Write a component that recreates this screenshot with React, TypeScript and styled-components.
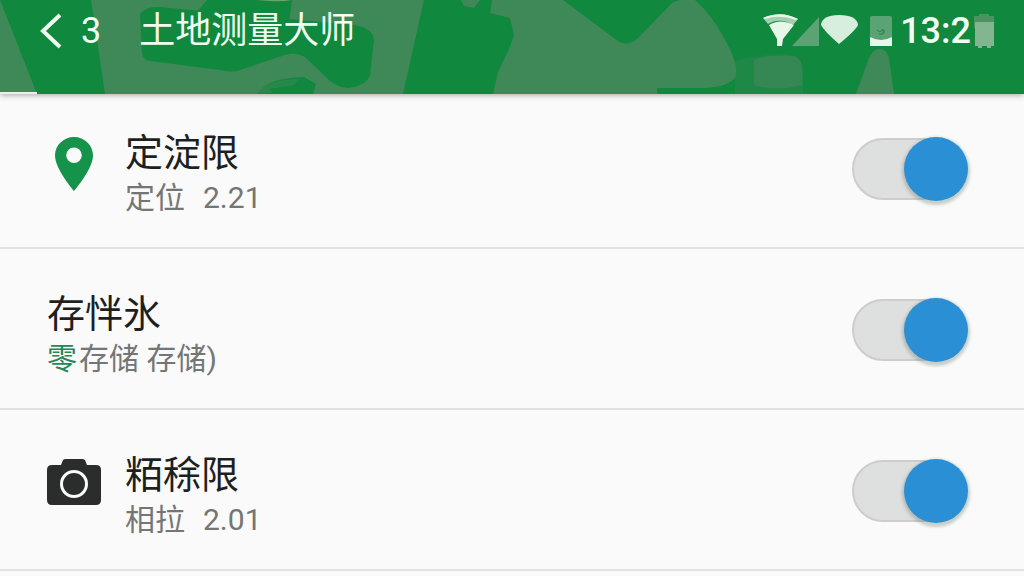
import React from 'react';
import styled, { createGlobalStyle } from 'styled-components';

const GlobalStyle = createGlobalStyle`
  * { box-sizing: border-box; }
  body {
    margin: 0;
    background: #f9faf9;
    font-family: Roboto, "Noto Sans CJK SC", sans-serif;
  }
`;

const Header = styled.header`
  position: relative;
  display: flex;
  align-items: flex-start;
  height: 94px;
  padding: 7px 29px 0 40px;
  background: #10883e;
  color: #f0fff2;
  box-shadow: 0 1px 6px rgba(0, 0, 0, 0.35);
`;

const Pattern = styled.svg`
  position: absolute;
  inset: 0;
  width: 100%;
  height: 100%;
`;

const BackButton = styled.button`
  position: relative;
  display: flex;
  align-items: center;
  gap: 19px;
  height: 48px;
  padding: 0;
  border: 0;
  background: none;
  color: inherit;
  font: 36px/48px Roboto, sans-serif;
`;

const Title = styled.h1`
  position: relative;
  flex: 1;
  margin: 0 0 0 38px;
  font-size: 36px;
  line-height: 48px;
  font-weight: 400;
`;

const Status = styled.div`
  position: relative;
  display: flex;
  align-items: center;
  height: 48px;
`;

const Clock = styled.time`
  margin: 0 3px 0 8px;
  font-size: 36px;
  line-height: 48px;
  font-weight: 500;
`;

const Progress = styled.div`
  position: absolute;
  left: 0;
  bottom: 0;
  width: 37px;
  height: 2px;
  background: #e4f3e7;
`;

const Row = styled.label`
  display: flex;
  align-items: flex-start;
  height: 161px;
  padding: 41px 60px 0 47px;
  border-bottom: 2px solid #e0e2e1;

  &:first-child {
    height: 155px;
    padding-top: 35px;
  }
`;

const IconSlot = styled.span`
  display: flex;
  justify-content: center;
  width: 54px;
  margin-right: 24px;
  padding-top: 8px;
`;

const Texts = styled.span`
  display: flex;
  flex: 1;
  flex-direction: column;
`;

const Name = styled.span`
  color: #1e1f1f;
  font-size: 38px;
  line-height: 48px;
`;

const Detail = styled.span`
  color: #747675;
  font-size: 30px;
  line-height: 42px;
`;

const Value = styled.span`
  margin-left: 18px;
`;

const Accent = styled.span`
  margin-right: 2px;
  color: #26865a;
`;

const Switch = styled.input`
  appearance: none;
  display: flex;
  align-items: center;
  width: 112px;
  height: 62px;
  margin: 9px 0 0;
  border: 2px solid #cccdcd;
  border-radius: 31px;
  background: #dedfdf;

  &::before {
    content: "";
    flex: none;
    width: 64px;
    height: 64px;
    border-radius: 50%;
    background: #f4f4f4;
    box-shadow: 0 2px 3px 2px rgba(110, 125, 115, 0.35);
  }

  &:checked::before {
    margin-left: 50px;
    background: #2b8fd5;
  }
`;

const PinIcon = () => (
  <svg width="38" height="54" viewBox="0 0 38 54" aria-hidden="true">
    <path fill="#16934a" fillRule="evenodd" d="M19 0C8.500 0 0 8.200 0 18.500C0 32 19 54 19 54S38 32 38 18.500C38 8.200 29.500 0 19 0ZM19 10.500a7.800 7.800 0 1 1 0 15.600a7.800 7.800 0 0 1 0-15.600Z" />
  </svg>
);

const CameraIcon = () => (
  <svg width="54" height="48" viewBox="0 0 54 48" aria-hidden="true">
    <path fill="#2b2c2c" d="M5 6H14L16 1Q17 0 19 0H35Q37 0 38 1L40 6H49Q54 6 54 11V41Q54 46 49 46H5Q0 46 0 41V11Q0 6 5 6Z" />
    <circle cx="27" cy="25" r="12.500" fill="none" stroke="#fafafa" strokeWidth="3" />
  </svg>
);

const MapPattern = () => (
  <Pattern viewBox="0 0 1024 94" preserveAspectRatio="none" aria-hidden="true">
    <g fill="#3f8858">
      <path d="M0 0L37 94H0Z" />
      <path d="M91 0H530L563 0L614 38Q626 49 638 38L673 2L680 0H695Q712 15 724 38Q740 66 735 78Q725 89 695 88H657V94H105Z" />
      <path d="M735 61Q755 55 785 54Q803 55 803 72V94H735Z" opacity="0.300" />
      <path d="M754 60Q767 54 794 56Q802 58 802 70V85Q778 92 754 85Z" opacity="0.700" />
      <path d="M856 94L869 58Q873 49 879 49Q887 49 889 58L894 94Z" />
    </g>
    <g fill="#10883e">
      <path d="M140 15Q144 6 160 7L190 10L354 25Q373 28 374 40L370 75Q366 86 348 88Q337 87 329 80L305 57Q295 51 285 55L240 70Q231 73 220 70L150 61Q143 60 142 53Z" />
      <path d="M207 0H292L288 32H180Z" />
      <path d="M424 0H461L464 6L474 8L480 0H492L490 13L510 18L514 35L509 49L498 72L493 94H403Z" />
      <path d="M257 94Q266 80 292 78L304 77L316 84L313 94Z" />
    </g>
    <path d="M258 91Q267 80 299 79L294 85L270 89L272 93L257 94Z" fill="#3f8858" opacity="0.500" />
    <path d="M256 0H292Q280 2 270 1Z" fill="#6da56d" />
  </Pattern>
);

const StatusIcons = () => (
  <svg width="130" height="36" viewBox="762 11 130 36" aria-hidden="true">
    <path d="M763 16Q781 8 798 17L793 23Q780 15 768 22Z" fill="#a4cfae" />
    <path d="M763 16Q781 8 798 17L796 18Q780 12 765 17Z" fill="#e6f6e8" />
    <path d="M769 23Q780 16 794 23L783 37L782 44H777V37Z" fill="#e6f6e8" />
    <path d="M819 15V44H792Z" fill="#5ba373" />
    <path d="M821 23Q822 13 839 13Q857 13 858 23Q856 28 839 42Q824 29 821 23Z" fill="#d8eedc" />
    <rect x="870" y="14" width="22" height="30" rx="2" fill="#5ba373" />
    <path d="M870 35Q881 41 892 35V44H870Z" fill="#e6f6e8" />
    <path d="M877 28L880 30L883 27V32H879M884 28V31" fill="none" stroke="#337d4d" />
  </svg>
);

const BatteryIcon = () => (
  <svg width="21" height="36" viewBox="0 0 21 36" aria-hidden="true">
    <path d="M5 1H15V3H20V15H0V3H5Z" fill="#4d9362" />
    <path d="M1 9H20V33H17V35H13V33H8V35H4V33H1Z" fill="#83b591" />
  </svg>
);

interface Permission {
  name: string;
  detail: string;
  value?: string;
  accent?: string;
  icon?: React.ReactNode;
}

const permissions: Permission[] = [
  { name: '定淀限', detail: '定位', value: '2.21', icon: <PinIcon /> },
  { name: '存怑氷', accent: '零', detail: '存储 存储)' },
  { name: '粨稌限', detail: '相拉', value: '2.01', icon: <CameraIcon /> },
];

export default function App() {
  return (
    <>
      <GlobalStyle />
      <Header>
        <MapPattern />
        <BackButton type="button" aria-label="返回 3">
          <svg width="22" height="36" viewBox="0 0 22 36" fill="none" stroke="currentColor" strokeWidth="4" aria-hidden="true">
            <path d="M20 2L3 18L20 34" />
          </svg>
          3
        </BackButton>
        <Title>土地测量大师</Title>
        <Status>
          <StatusIcons />
          <Clock>13:2</Clock>
          <BatteryIcon />
        </Status>
        <Progress />
      </Header>
      <main>
        {permissions.map((item) => (
          <Row key={item.name}>
            {item.icon && <IconSlot>{item.icon}</IconSlot>}
            <Texts>
              <Name>{item.name}</Name>
              <Detail>
                {item.accent && <Accent>{item.accent}</Accent>}
                {item.detail}
                {item.value && <Value>{item.value}</Value>}
              </Detail>
            </Texts>
            <Switch type="checkbox" defaultChecked />
          </Row>
        ))}
      </main>
    </>
  );
}
